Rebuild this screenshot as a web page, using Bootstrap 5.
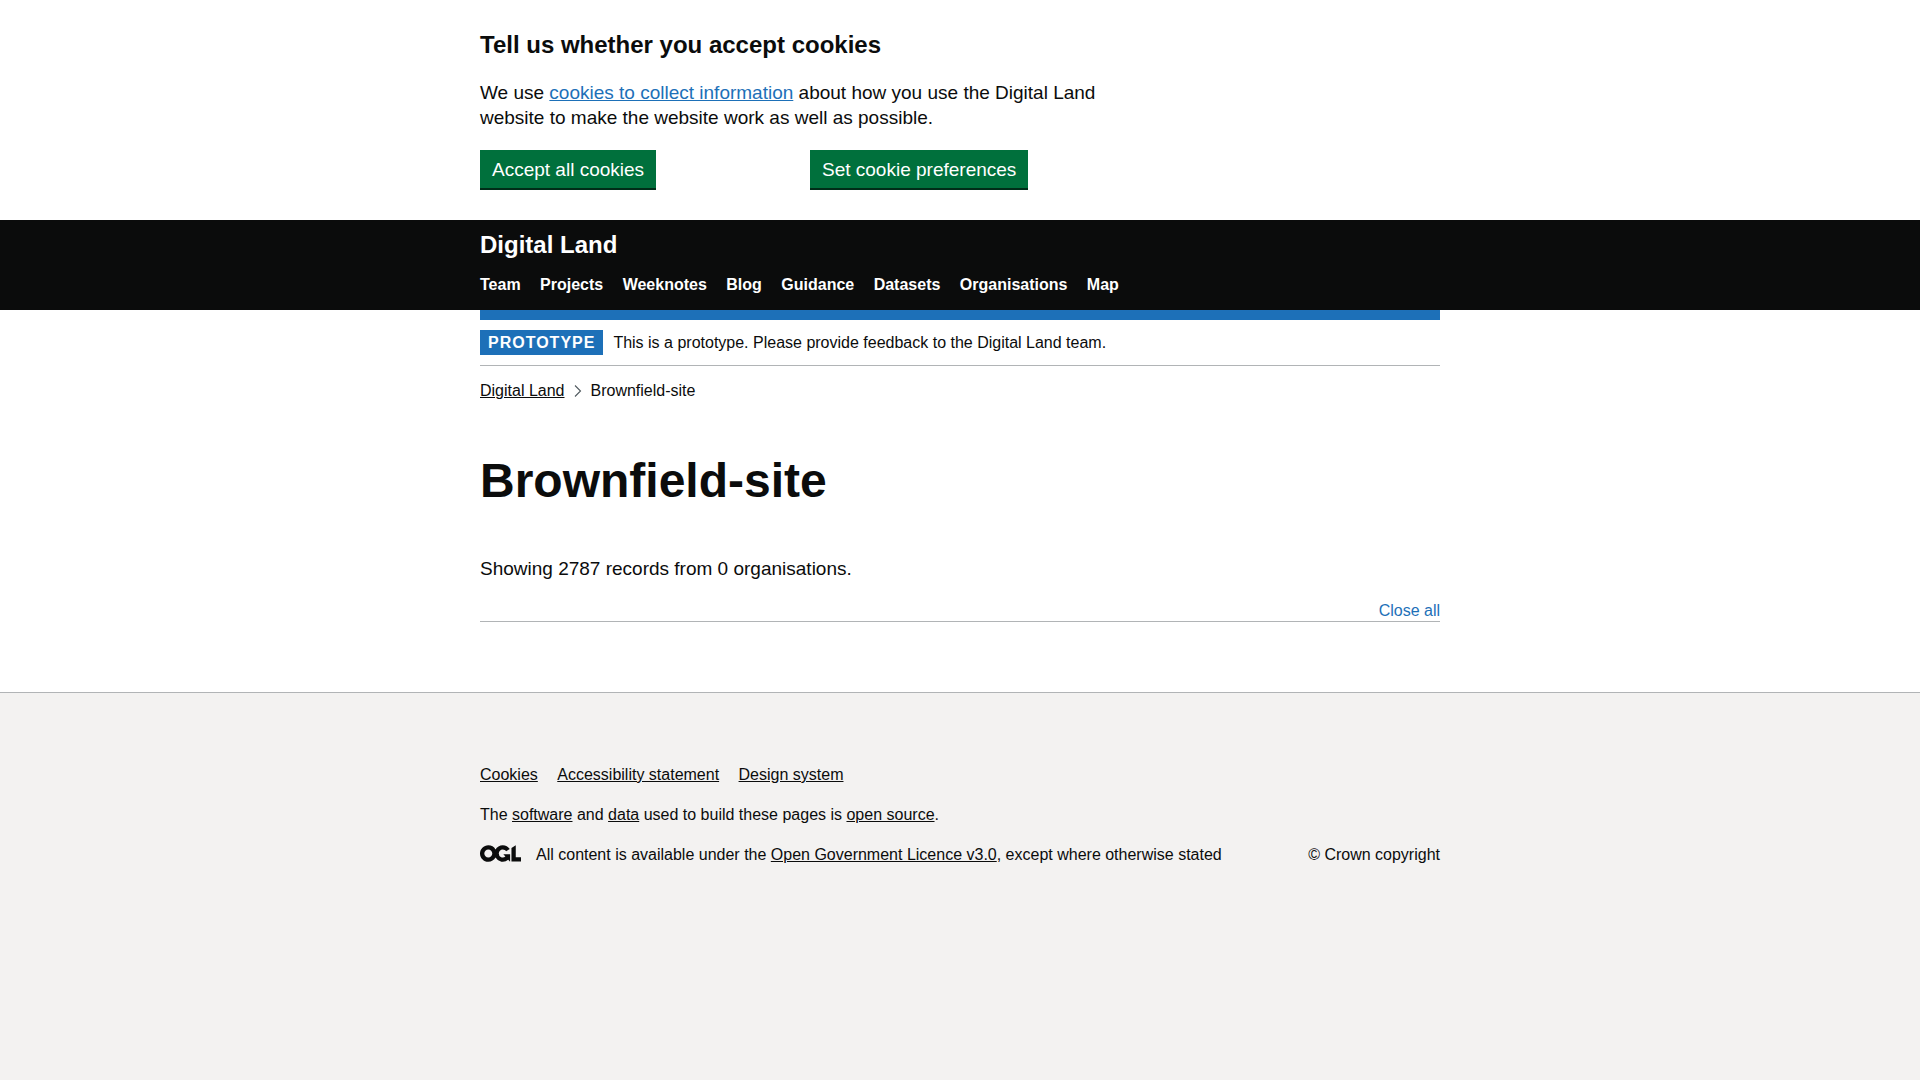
<!DOCTYPE html>
<html lang="en">
<head>
<meta charset="utf-8">
<meta name="viewport" content="width=device-width, initial-scale=1">
<title>Brownfield-site | Digital Land</title>
<link href="https://cdn.jsdelivr.net/npm/bootstrap@5.3.0/dist/css/bootstrap.min.css" rel="stylesheet">
<style>
  :root {
    --ink: #0b0c0c;
    --brand: #1d70b8;
    --rule: #b1b4b6;
  }
  body {
    font-family: "Liberation Sans", Arial, sans-serif;
    font-size: 16px;
    line-height: 20px;
    color: var(--ink);
    background: #fff;
  }
  .page-width {
    max-width: 990px;
    padding-left: 15px;
    padding-right: 15px;
  }
  .wide-gutters { --bs-gutter-x: 30px; }
  .body-text { font-size: 19px; line-height: 25px; }
  .title-m { font-size: 24px; line-height: 30px; font-weight: 700; }

  .cookie-notice { padding-top: 30px; padding-bottom: 30px; }
  .cookie-message { margin: 20px 0; }
  .cookie-message a { color: var(--brand); }
  .btn-action {
    --bs-btn-color: #fff;
    --bs-btn-bg: #00703c;
    --bs-btn-hover-color: #fff;
    --bs-btn-hover-bg: #005a30;
    --bs-btn-active-color: #fff;
    --bs-btn-active-bg: #005a30;
    --bs-btn-border-width: 0;
    --bs-btn-border-radius: 0;
    --bs-btn-font-size: 19px;
    --bs-btn-line-height: 20px;
    padding: 10px 12px 8px;
    border-bottom: 2px solid #002d18;
  }

  .site-header { background: var(--ink); padding-top: 10px; padding-bottom: 15px; }
  .site-header a { color: #fff; text-decoration: none; }
  .site-header a:hover { text-decoration: underline; }
  .site-nav { margin-top: 15px; font-weight: 700; }
  .spaced-links > li { display: inline-block; margin-right: 15px; }
  .spaced-links > li:last-child { margin-right: 0; }
  .brand-bar { height: 10px; background: var(--brand); }

  .phase { padding: 10px 0; gap: 10px; border-bottom: 1px solid var(--rule); }
  .phase-tag {
    padding: 5px 8px 4px;
    background: var(--brand);
    color: #fff;
    font-weight: 700;
    line-height: 16px;
    letter-spacing: 1px;
    text-transform: uppercase;
  }
  .ink-link, .ink-links a { color: var(--ink); }
  .crumbs { margin-top: 15px; gap: 9px; }

  .page-title { font-size: 48px; line-height: 50px; font-weight: 700; margin: 55px 0 50px; }
  .record-tools { margin-top: 20px; margin-bottom: 70px; border-bottom: 1px solid var(--rule); }
  .plain-btn { color: var(--brand); background: none; }

  .site-footer {
    background: #f3f2f1;
    border-top: 1px solid var(--rule);
    padding-top: 72px;
    padding-bottom: 40px;
  }
  .footer-stack { gap: 20px; }
  .licence { gap: 15px; }
</style>
</head>
<body class="d-flex flex-column min-vh-100">

<section class="cookie-notice" aria-label="Cookies">
  <div class="container page-width">
    <div class="row wide-gutters">
      <div class="col-md-8">
        <h2 class="title-m mb-0">Tell us whether you accept cookies</h2>
        <p class="cookie-message body-text">We use <a href="#">cookies to collect information</a> about how you use the Digital Land website to make the website work as well as possible.</p>
        <div class="row wide-gutters">
          <div class="col-sm-6"><button type="button" class="btn btn-action">Accept all cookies</button></div>
          <div class="col-sm-6"><a href="#" role="button" class="btn btn-action">Set cookie preferences</a></div>
        </div>
      </div>
    </div>
  </div>
</section>

<header class="site-header">
  <div class="container page-width">
    <a href="#" class="title-m d-inline-block align-top">Digital Land</a>
    <nav aria-label="Main">
      <ul class="site-nav spaced-links list-unstyled mb-0">
        <li><a href="#">Team</a></li>
        <li><a href="#">Projects</a></li>
        <li><a href="#">Weeknotes</a></li>
        <li><a href="#">Blog</a></li>
        <li><a href="#">Guidance</a></li>
        <li><a href="#">Datasets</a></li>
        <li><a href="#">Organisations</a></li>
        <li><a href="#">Map</a></li>
      </ul>
    </nav>
  </div>
</header>

<div class="container page-width">
  <div class="brand-bar"></div>
  <div class="phase d-flex align-items-center">
    <strong class="phase-tag">prototype</strong>
    <span>This is a prototype. Please provide feedback to the Digital Land team.</span>
  </div>
  <nav aria-label="Breadcrumb">
    <ol class="crumbs list-unstyled d-flex align-items-center mb-0">
      <li><a href="#" class="ink-link">Digital Land</a></li>
      <li class="d-flex" aria-hidden="true">
        <svg width="8" height="12" viewBox="0 0 8 12" fill="none" stroke="#505a5f" stroke-width="1.1"><path d="M1 .5 6.500 6 1 11.500"/></svg>
      </li>
      <li aria-current="page">Brownfield-site</li>
    </ol>
  </nav>

  <main>
    <h1 class="page-title">Brownfield-site</h1>
    <p class="body-text mb-0">Showing 2787 records from 0 organisations.</p>
    <div class="record-tools d-flex justify-content-end">
      <button type="button" class="plain-btn border-0 p-0">Close all</button>
    </div>
  </main>
</div>

<footer class="site-footer ink-links flex-grow-1">
  <div class="container page-width">
    <div class="footer-stack d-flex flex-column">
      <ul class="spaced-links list-unstyled mb-0">
        <li><a href="#">Cookies</a></li>
        <li><a href="#">Accessibility statement</a></li>
        <li><a href="#">Design system</a></li>
      </ul>
      <div>The <a href="#">software</a> and <a href="#">data</a> used to build these pages is <a href="#">open source</a>.</div>
      <div class="d-flex flex-wrap justify-content-between">
        <div class="licence d-flex">
          <svg class="flex-shrink-0" role="img" aria-label="OGL" width="41" height="17" viewBox="0 0 483.2 195.7"><path fill="#0b0c0c" d="M421.5 142.8V.1l-50.7 32.3v161.1h112.4v-50.7zm-122.3-9.6A47.12 47.12 0 0 1 221 97.8c0-26 21.1-47.1 47.1-47.1 16.7 0 31.4 8.7 39.7 21.8l42.7-27.2A97.63 97.63 0 0 0 268.1 0c-36.5 0-68.3 20.1-85.1 49.7A98 98 0 0 0 97.8 0C43.9 0 0 43.9 0 97.8s43.9 97.8 97.8 97.8c36.5 0 68.3-20.1 85.1-49.7a97.76 97.76 0 0 0 149.6 25.4l19.4 22.2h3v-87.8h-80l24.3 27.5zM97.8 145c-26 0-47.1-21.1-47.1-47.1s21.1-47.1 47.1-47.1 47.1 21.1 47.1 47.1S123.8 145 97.8 145"/></svg>
          <span>All content is available under the <a href="#">Open Government Licence v3.0</a>, except where otherwise stated</span>
        </div>
        <a href="#" class="text-decoration-none">© Crown copyright</a>
      </div>
    </div>
  </div>
</footer>

<script src="https://cdn.jsdelivr.net/npm/bootstrap@5.3.0/dist/js/bootstrap.bundle.min.js"></script>
</body>
</html>
